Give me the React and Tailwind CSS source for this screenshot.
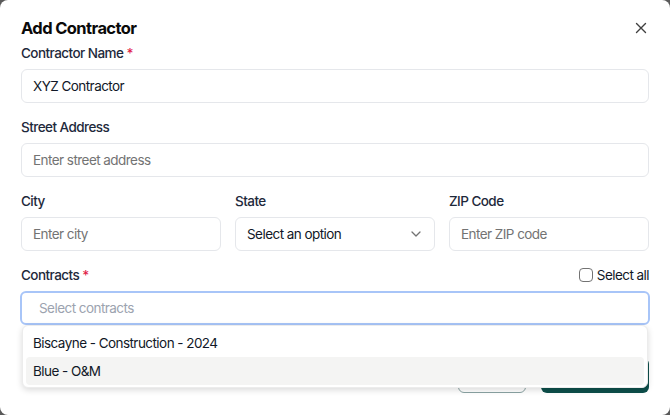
import React, { useState } from 'react'

const Label = ({ children, required }) => (
  <div className="h-5 mb-1.5 text-[13.5px] tracking-[-0.55px] leading-5 font-medium text-[#1e293b]">
    {children}
    {required && <span className="text-[#e11d48]"> *</span>}
  </div>
)

const TextInput = ({ value, placeholder }) => (
  <div className="h-[34px] rounded-md border border-[#e5e7eb] bg-white px-[11px] flex items-center text-[13.5px] tracking-[-0.55px]">
    {value ? (
      <span className="text-[#111827]">{value}</span>
    ) : (
      <span className="text-[#737373]">{placeholder}</span>
    )}
  </div>
)

const App = () => {
  const [selectAll, setSelectAll] = useState(false)
  const contracts = ['Biscayne - Construction - 2024', 'Blue - O&M']

  return (
    <div className="w-[670px] h-[415px] bg-[#5a5a5a]" style={{ fontFamily: 'Inter, "Noto Sans", sans-serif' }}>
      <div className="relative w-full h-full bg-white rounded-lg px-[21px] pt-[14px]">
        <div className="flex items-center justify-between h-7">
          <h2 className="text-[16.5px] font-bold text-[#0a0a0a] tracking-[-0.6px]">Add Contractor</h2>
          <button className="mr-[2px] text-[#404040]">
            <svg width="12" height="12" viewBox="0 0 12 12" fill="none" stroke="currentColor" strokeWidth="1.4" strokeLinecap="round">
              <path d="M1.5 1.5l9 9M10.5 1.5l-9 9" />
            </svg>
          </button>
        </div>

        <div className="mt-px flex flex-col gap-[14px]">
          <div>
            <Label required>Contractor Name</Label>
            <TextInput value="XYZ Contractor" />
          </div>
          <div>
            <Label>Street Address</Label>
            <TextInput placeholder="Enter street address" />
          </div>
          <div className="grid grid-cols-3 gap-[14px]">
            <div>
              <Label>City</Label>
              <TextInput placeholder="Enter city" />
            </div>
            <div>
              <Label>State</Label>
              <div className="h-[34px] rounded-md border border-[#e5e7eb] bg-white pl-[11px] pr-[13px] flex items-center justify-between text-[13.5px] tracking-[-0.55px] text-[#111827]">
                <span>Select an option</span>
                <svg width="10" height="6" viewBox="0 0 10 6" fill="none" stroke="#737373" strokeWidth="1.3" strokeLinecap="round" strokeLinejoin="round">
                  <path d="M1 1l4 4 4-4" />
                </svg>
              </div>
            </div>
            <div>
              <Label>ZIP Code</Label>
              <TextInput placeholder="Enter ZIP code" />
            </div>
          </div>
          <div className="relative">
            <div className="flex items-start justify-between">
              <Label required>Contracts</Label>
              <label className="flex items-center gap-[4px] h-5 text-[13.5px] tracking-[-0.55px] text-[#111827] cursor-pointer">
                <span
                  onClick={() => setSelectAll(!selectAll)}
                  className={`w-[14px] h-[14px] rounded-[4px] border border-[#737373] ${selectAll ? 'bg-[#0d4f4b]' : 'bg-white'}`}
                />
                Select all
              </label>
            </div>
            <div className="h-[34px] -mx-px rounded-md border-2 border-[#a8c5f8] bg-white px-[17px] flex items-center text-[13.5px] tracking-[-0.55px] text-[#9ca3af]">
              Select contracts
            </div>
            <div className="absolute left-px right-px top-[60px] z-10 bg-white rounded-md shadow-[0_2px_6px_rgba(0,0,0,0.15)] border border-[#ececec] px-[3px] pt-[3px] pb-[2px]">
              {contracts.map((c, i) => (
                <div
                  key={c}
                  className={`h-7 px-[7px] flex items-center rounded-sm text-[13.5px] tracking-[-0.55px] text-[#111827] ${i === 1 ? 'bg-[#f4f4f3]' : ''}`}
                >
                  {c}
                </div>
              ))}
            </div>
          </div>
        </div>

        <div className="mt-[33px] flex justify-end gap-[15px]">
          <button className="w-[68px] h-[35px] rounded-md border border-[#8aa3a3] bg-white text-[13px] text-[#0d4f4b]">
            Cancel
          </button>
          <button className="w-[108px] h-[35px] rounded-md bg-[#0d4f4b] text-[13px] text-white">
            Add Contractor
          </button>
        </div>
      </div>
    </div>
  )
}

export default App
